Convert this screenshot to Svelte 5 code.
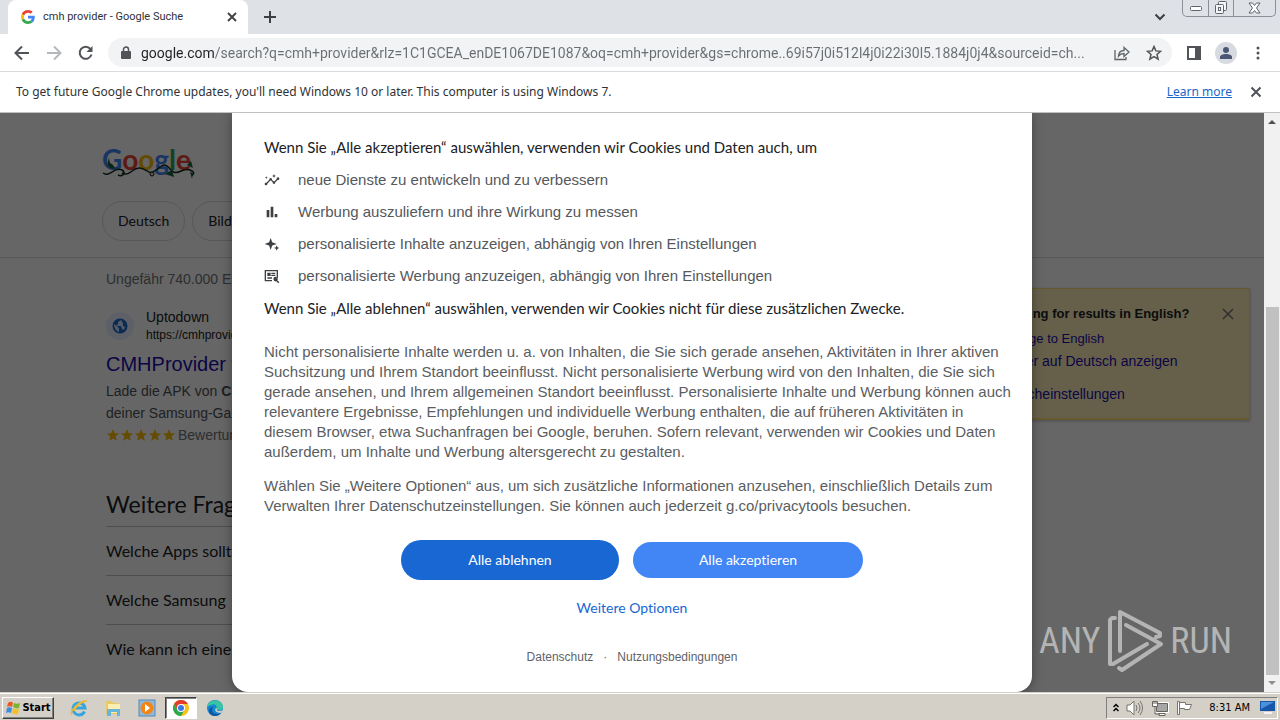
<script>
  const url = 'google.com/search?q=cmh+provider&rlz=1C1GCEA_enDE1067DE1087&oq=cmh+provider&gs=chrome..69i57j0i512l4j0i22i30l5.1884j0j4&sourceid=ch...';
  const uses = [
    { icon: 'M21 8c-1.45 0-2.26 1.44-1.93 2.51l-3.55 3.56c-.3-.09-.74-.09-1.04 0l-2.55-2.55C12.27 10.45 11.46 9 10 9c-1.45 0-2.27 1.44-1.93 2.52l-4.56 4.55C2.44 15.74 1 16.55 1 18a2 2 0 0 0 2 2c1.45 0 2.26-1.44 1.93-2.51l4.55-4.56c.3.09.74.09 1.04 0l2.55 2.55C12.73 16.55 13.54 18 15 18c1.45 0 2.27-1.44 1.93-2.52l3.56-3.55C21.56 12.26 23 11.45 23 10a2 2 0 0 0-2-2zM15 9l.94-2.07L18 6l-2.06-.93L15 3l-.92 2.07L12 6l2.08.93zM3.500 11L4 9l2-.5L4 8l-.5-2L3 8l-2 .5L3 9z', text: 'neue Dienste zu entwickeln und zu verbessern' },
    { icon: 'M4 9h4v11H4zM10 4h4v16h-4zM16 15h4v5h-4z', text: 'Werbung auszuliefern und ihre Wirkung zu messen' },
    { icon: 'M10 3l2.300 6.200L19 12l-6.700 2.300L10 21l-2.300-6.700L1 12l6.700-2.800zM19 14l1.200 2.800L23 18l-2.800 1.200L19 22l-1.200-2.800L15 18l2.800-1.200z', text: 'personalisierte Inhalte anzuzeigen, abhängig von Ihren Einstellungen' },
    { icon: 'M1 3h20v12h-2V5H3v13h9v2H1zM5 7h5v5H5zM11 7h6v2h-6zM11 10h6v2h-6zM5 14h7v2H5zM17 13a3.500 3.500 0 0 1 3 5.500l3 3-1.500 1.500-3-3A3.500 3.500 0 1 1 17 13z', text: 'personalisierte Werbung anzuzeigen, abhängig von Ihren Einstellungen' }
  ];
  const questions = ['Welche Apps sollte', 'Welche Samsung', 'Wie kann ich eine'];
</script>

<div class="desktop">
  <header>
    <div class="tabs">
      <div class="tab">
        <svg width="14" height="14" viewBox="0 0 48 48"><path fill="#EA4335" d="M24 9.500c3.540 0 6.710 1.220 9.210 3.600l6.850-6.850C35.900 2.380 30.470 0 24 0 14.620 0 6.510 5.380 2.560 13.220l7.980 6.190C12.430 13.720 17.740 9.500 24 9.500z"/><path fill="#4285F4" d="M46.980 24.550c0-1.570-.15-3.090-.38-4.550H24v9.020h12.940c-.58 2.960-2.260 5.480-4.780 7.180l7.730 6c4.510-4.180 7.090-10.360 7.090-17.650z"/><path fill="#FBBC05" d="M10.530 28.590c-.48-1.450-.76-2.990-.76-4.590s.27-3.140.76-4.590l-7.980-6.190C.92 16.460 0 20.120 0 24c0 3.880.92 7.540 2.560 10.780z"/><path fill="#34A853" d="M24 48c6.480 0 11.930-2.130 15.890-5.810l-7.730-6c-2.150 1.450-4.920 2.300-8.160 2.300-6.260 0-11.570-4.220-13.470-9.910l-7.980 6.190C6.510 42.620 14.620 48 24 48z"/></svg>
        <span>cmh provider - Google Suche</span>
        <button aria-label="Close tab"><svg width="10" height="10" viewBox="0 0 10 10"><path d="M1 1l8 8M9 1L1 9" stroke="#3c4043" stroke-width="1.800"/></svg></button>
      </div>
      <button class="newtab" aria-label="New tab"><svg width="12" height="12" viewBox="0 0 12 12"><path d="M6 0v12M0 6h12" stroke="#3c4043" stroke-width="2"/></svg></button>
      <button class="tabsearch" aria-label="Search tabs"><svg width="12" height="8" viewBox="0 0 12 8"><path d="M1.500 1.500L6 6l4.500-4.500" fill="none" stroke="#3c4043" stroke-width="2"/></svg></button>
      <div class="winctl">
        <button aria-label="Minimize"><svg width="12" height="5" viewBox="0 0 12 5"><rect x=".5" y=".5" width="11" height="4" rx="1" fill="#fff" stroke="#60646c"/></svg></button>
        <button aria-label="Restore"><svg width="14" height="14" viewBox="0 0 14 14" fill="#f4f5f7" stroke="#60646c"><rect x="4.500" y=".5" width="8" height="9" rx="1"/><rect x="1.500" y="3.500" width="8" height="9" rx="1"/><rect x="4.500" y="6.500" width="2" height="3"/></svg></button>
        <button class="wide" aria-label="Close"><svg width="13" height="12" viewBox="0 0 13 12"><path d="M1 1h3.500l2 2.500L8.500 1H12L8.500 6l3.500 5H8.500l-2-2.500-2 2.500H1l3.500-5z" fill="#fff" stroke="#60646c"/></svg></button>
      </div>
    </div>

    <div class="toolbar">
      <button aria-label="Back"><svg width="16" height="16" viewBox="0 0 16 16"><path d="M15 8H2M8 1.500L1.500 8 8 14.500" fill="none" stroke="#505357" stroke-width="2"/></svg></button>
      <button aria-label="Forward"><svg width="16" height="16" viewBox="0 0 16 16"><path d="M1 8h13M8 1.500L14.500 8 8 14.500" fill="none" stroke="#b5b8bb" stroke-width="2"/></svg></button>
      <button aria-label="Reload"><svg width="16" height="16" viewBox="0 0 16 16"><path d="M13.500 9.500A6 6 0 1 1 12.400 4" fill="none" stroke="#505357" stroke-width="2"/><path d="M14.500 1v6h-6z" fill="#505357"/></svg></button>
      <div class="omnibox">
        <svg width="10" height="13" viewBox="0 0 10 13"><path d="M2.500 6V3.500a2.500 2.500 0 0 1 5 0V6" fill="none" stroke="#505357" stroke-width="1.500"/><rect x="0" y="5" width="10" height="8" rx="1" fill="#505357"/></svg>
        <input aria-label="Address and search bar" value={url} />
        <button aria-label="Share"><svg width="16" height="16" viewBox="0 0 16 16" fill="none" stroke="#5f6368" stroke-width="1.300"><path d="M1 5v9.500h11V12"/><path d="M4.500 11c.3-4 2.500-5.500 5.500-5.500V2.500L15 7l-5 4.500V8.500c-2.500 0-4 .5-5.500 2.500z"/></svg></button>
        <button aria-label="Bookmark"><svg width="16" height="16" viewBox="0 0 16 16"><path d="M8 1.500l1.900 4.400 4.600.4-3.500 3.100 1.100 4.700L8 11.600l-4.100 2.500L5 9.400 1.500 6.300l4.600-.4z" fill="none" stroke="#505357" stroke-width="1.500"/></svg></button>
      </div>
      <button aria-label="Side panel"><svg width="14" height="14" viewBox="0 0 14 14"><path d="M0 0h14v14H0zM2 2v10h6V2z" fill-rule="evenodd" fill="#505357"/></svg></button>
      <button class="avatar" aria-label="Profile"><svg width="12" height="12" viewBox="0 0 12 12" fill="#4b5675"><circle cx="6" cy="3" r="3"/><path d="M0 12V10c0-2 3-3 6-3s6 1 6 3v2z"/></svg></button>
      <button aria-label="Menu"><svg width="4" height="14" viewBox="0 0 4 14" fill="#505357"><circle cx="2" cy="2" r="1.500"/><circle cx="2" cy="7" r="1.500"/><circle cx="2" cy="12" r="1.500"/></svg></button>
    </div>

    <div class="infobar">
      <span>To get future Google Chrome updates, you'll need Windows 10 or later. This computer is using Windows 7.</span>
      <a href="#learn">Learn more</a>
      <button aria-label="Dismiss"><svg width="12" height="12" viewBox="0 0 12 12"><path d="M1.500 1.500l9 9M10.500 1.500l-9 9" stroke="#505357" stroke-width="2"/></svg></button>
    </div>
  </header>

  <div class="view">
    <div class="page">
      <div class="pagehead">
        <svg class="logo" width="96" height="38" viewBox="0 0 96 38" role="img" aria-label="Google">
          <text x="0" y="25" font-family="Lato, sans-serif" font-size="28" font-weight="700"><tspan fill="#4285f4">G</tspan><tspan fill="#ea4335">o</tspan><tspan fill="#fbbc05">o</tspan><tspan fill="#4285f4">g</tspan><tspan fill="#34a853">l</tspan><tspan fill="#ea4335">e</tspan></text>
          <path d="M1 28c7 5 11-7 19-3 5 3 0 7-4 5M20 28c9 4 10-6 18-5s8 8 16 2 9-7 15 0 12-3 19 0 2 4 2 6" fill="none" stroke="#152c22" stroke-width="1.500"/>
          <path d="M7 13c-3 8 0 11 6 11-1-4-3-5-5-6M63 29l7-4 2 7zM85 20l4-4 2 7zM88 27l3 1-1 6z" fill="#17613f"/><circle cx="50" cy="29" r="2" fill="#ddd" stroke="#111"/>
        </svg>
        <div class="chips"><button>Deutsch</button><button>Bilder</button></div>
      </div>
      <div class="results">
        <main>
          <p class="stats">Ungefähr 740.000 Erg</p>
          <div class="source">
            <span class="globe"><svg width="16" height="16" viewBox="0 0 16 16"><circle cx="8" cy="8" r="7.500" fill="#1967d2"/><path d="M2 6l5 4v4C4 13 2 10 2 6zM9 2l-3 2v2L4 8h5l1 3 2 1 1-3-2-1V5z" fill="#d3e3fd"/></svg></span>
            <div><div class="site">Uptodown</div><div class="link">https://cmhprovid</div></div>
          </div>
          <a class="title" href="#result">CMHProvider für</a>
          <p class="desc">Lade die APK von <b>CM</b><br />deiner Samsung-Gal</p>
          <p class="rating"><span>{#each Array(5) as _}<svg width="14" height="14" viewBox="0 0 14 14"><path d="M7 1l1.700 4.200 4.300.3-3.300 2.800 1.100 4.500L7 10.400l-3.800 2.400 1.100-4.500L1 5.500l4.300-.3z" fill="#fbbc04"/></svg>{/each}</span>Bewertung</p>
          <h2>Weitere Fragen</h2>
          {#each questions as q}<div class="question">{q}</div>{/each}
        </main>
        <aside>
          <div class="tip"><strong>Looking for results in English?</strong><button aria-label="Close"><svg width="12" height="12" viewBox="0 0 12 12"><path d="M1 1l10 10M11 1L1 11" stroke="#70757a" stroke-width="1.500"/></svg></button></div>
          <a class="l1" href="#en">Change to English</a>
          <a class="l2" href="#de">Weiter auf Deutsch anzeigen</a>
          <a class="l3" href="#lang">Spracheinstellungen</a>
        </aside>
      </div>
    </div>

    <div class="scrim">
      <div class="dialog" role="dialog" aria-label="Cookies">
        <p class="lead">Wenn Sie „Alle akzeptieren“ auswählen, verwenden wir Cookies und Daten auch, um</p>
        <ul>
          {#each uses as u}<li><svg width="16" height="16" viewBox="0 0 24 24" fill="#3c4043"><path fill-rule="evenodd" d={u.icon} /></svg>{u.text}</li>{/each}
        </ul>
        <p class="lead">Wenn Sie „Alle ablehnen“ auswählen, verwenden wir Cookies nicht für diese zusätzlichen Zwecke.</p>
        <p class="body first">Nicht personalisierte Inhalte werden u. a. von Inhalten, die Sie sich gerade ansehen, Aktivitäten in Ihrer aktiven<br />Suchsitzung und Ihrem Standort beeinflusst. Nicht personalisierte Werbung wird von den Inhalten, die Sie sich<br />gerade ansehen, und Ihrem allgemeinen Standort beeinflusst. Personalisierte Inhalte und Werbung können auch<br />relevantere Ergebnisse, Empfehlungen und individuelle Werbung enthalten, die auf früheren Aktivitäten in<br />diesem Browser, etwa Suchanfragen bei Google, beruhen. Sofern relevant, verwenden wir Cookies und Daten<br />außerdem, um Inhalte und Werbung altersgerecht zu gestalten.</p>
        <p class="body">Wählen Sie „Weitere Optionen“ aus, um sich zusätzliche Informationen anzusehen, einschließlich Details zum<br />Verwalten Ihrer Datenschutzeinstellungen. Sie können auch jederzeit g.co/privacytools besuchen.</p>
        <div class="actions"><button class="reject">Alle ablehnen</button><button class="accept">Alle akzeptieren</button></div>
        <a class="more" href="#options">Weitere Optionen</a>
        <div class="legal"><a href="#privacy">Datenschutz</a><span>·</span><a href="#terms">Nutzungsbedingungen</a></div>
      </div>
    </div>

    <div class="watermark">
      <span>ANY</span>
      <svg width="58" height="66" viewBox="0 0 58 66" fill="none" stroke="#b4b4b4" stroke-width="4" stroke-linecap="round" stroke-linejoin="round"><path d="M9 10H6l-2 2v44h3l34-20M14 43V4l40 21v3l-4 1M20 17l35 19-39 26-3-2"/></svg>
      <span>RUN</span>
    </div>

    <div class="scrollbar"><svg width="8" height="4" viewBox="0 0 8 4"><path d="M0 4l4-4 4 4z" fill="#505050"/></svg><div class="thumb"></div><svg width="8" height="4" viewBox="0 0 8 4"><path d="M0 0l4 4 4-4z" fill="#909090"/></svg></div>
  </div>

  <footer>
    <button class="start"><svg width="16" height="16" viewBox="0 0 16 16"><path d="M3 3c2-2 4-1 5 0L7 7C5 6 4 6 2 7z" fill="#ea5b25"/><path d="M9 3c2 1 4 1 6 0l-1 5c-2 1-4 0-6-1z" fill="#79b530"/><path d="M2 8c2-1 3-1 5 0l-1 5c-2-1-3-1-5 0z" fill="#3a8de0"/><path d="M8 8c2 1 4 2 6 1l-1 5c-2 1-4 0-6-1z" fill="#f6c02c"/></svg>Start</button>
    <button class="task" aria-label="Internet Explorer"><svg width="18" height="18" viewBox="0 0 18 18" fill="none"><path d="M14.500 12.500A6 6 0 1 1 15 9H5" stroke="#36a5dc" stroke-width="3"/><path d="M2 16C-1 13 9 1 17 2c-4-.5-11 5-13 10" stroke="#e8ba36" stroke-width="1.500"/></svg></button>
    <button class="task" aria-label="Explorer"><svg width="18" height="18" viewBox="0 0 18 18"><path d="M2 2h6l1 2h6v11H2z" fill="#e8c965"/><path d="M4 5h12v9H4z" fill="#fbeeb0"/><path d="M3 10h13v7h-3v-4H7v4H3z" fill="#69b5d7"/></svg></button>
    <button class="task" aria-label="Media Player"><svg width="18" height="18" viewBox="0 0 18 18"><rect x="1" y="1" width="16" height="16" fill="#8dbbe0" stroke="#5689b5"/><circle cx="9" cy="9" r="6.500" fill="#f28518"/><path d="M7 5l5 4-5 4z" fill="#fff"/></svg></button>
    <button class="task active" aria-label="Chrome"><svg width="16" height="16" viewBox="0 0 16 16"><circle cx="8" cy="8" r="8" fill="#fbc116"/><path d="M1.070 4A8 8 0 0 1 14.930 4H8L4.500 10z" fill="#e33b2e"/><path d="M1.070 4A8 8 0 0 0 8 16l3.500-6H4.500z" fill="#2da94f"/><circle cx="8" cy="8" r="4" fill="#fff"/><circle cx="8" cy="8" r="3" fill="#3b78e7"/></svg></button>
    <button class="task" aria-label="Edge"><svg width="18" height="18" viewBox="0 0 18 18"><circle cx="9" cy="9" r="8" fill="#1685d1"/><path d="M1 8C2 0 16-1 17 8c0 4-5 4-7 2 2-3-1-6-5-4-2 1-3 1-4 2z" fill="#39c5a4"/><path d="M7 8c-3 5 2 9 8 6-4 5-12 3-12-2 0-3 2-4 4-4z" fill="#0d559f"/><path d="M11 10c-1 2 2 3 6 1l-2 3c-5 0-7-3-5-5z" fill="#d5d0c8"/></svg></button>
    <div class="tray">
      <svg width="6" height="9" viewBox="0 0 6 9"><path d="M.5 4L3 1.500 5.500 4M.5 8L3 5.500 5.500 8" fill="none" stroke="#000" stroke-width="1.500"/></svg>
      <svg width="18" height="16" viewBox="0 0 18 16" fill="none" stroke="#77736e"><path d="M1 5h3l4-4v14l-4-4H1z" fill="#fff"/><path d="M10 5q2 3 0 6M12 3q4 5 0 10M14 1q5 7 0 14"/></svg>
      <svg width="18" height="16" viewBox="0 0 18 16" stroke="#66635e"><path d="M5.500 3.500h11v8h-11z" fill="#a6a6a6" stroke="#fff" stroke-width="3"/><path d="M5.500 3.500h11v8h-11z" fill="#a6a6a6"/><path d="M1.500 1.500h5v5h-5zM3 1v3M5 1v3M8 13.500h6v2H8z" fill="#fff"/><path d="M4 7v7h5" fill="none"/></svg>
      <svg width="17" height="16" viewBox="0 0 17 16" fill="#fff" stroke="#77736e"><path d="M1.500 1.500h2v13h-2zM3.500 2.500h6v2h6l-2 5h-5v-1h-5z"/></svg>
      <time>8:31 AM</time>
      <svg width="15" height="13" viewBox="0 0 15 13"><rect width="15" height="10" fill="#1756a8"/><path d="M1 1h13L1 8z" fill="#4a91da"/><path d="M4 11h8v2H4z" fill="#f4f4f4"/></svg>
    </div>
  </footer>
</div>

<style>
  :global(body) { margin: 0; }
  * { box-sizing: border-box; }
  svg { display: block; flex: none; }
  p, ul, h2 { margin: 0; padding: 0; }
  button { border: 0; background: none; padding: 0; font: inherit; color: inherit; display: flex; align-items: center; justify-content: center; flex: none; }
  a { text-decoration: none; }
  .desktop { height: 100vh; display: flex; flex-direction: column; overflow: hidden; font: 12px/16px "Noto Sans", sans-serif; color: #303236; }
  header { flex: none; background: #fff; border-bottom: 1px solid #bfc1c4; }
  .tabs { height: 34px; background: #dee1e6; display: flex; padding-left: 8px; }
  .tab { width: 240px; background: #fff; border-radius: 8px 8px 0 0; display: flex; align-items: center; gap: 8px; padding: 0 11px 0 13px; font-family: Roboto, sans-serif; font-size: 11px; }
  .tab span { flex: 1; white-space: nowrap; }
  .newtab { width: 44px; }
  .tabsearch { margin-left: auto; width: 44px; }
  .winctl { display: flex; height: 17px; border: 1px solid #8b8f98; border-top: 0; border-radius: 0 0 5px 5px; margin-right: 4px; }
  .winctl button { width: 25px; }
  .winctl button + button { border-left: 1px solid #8b8f98; }
  .winctl .wide { width: 42px; }
  .toolbar { height: 38px; display: flex; align-items: center; gap: 16px; padding: 0 14px; border-bottom: 1px solid #d8dadd; }
  .toolbar > button { min-width: 16px; }
  .omnibox { flex: 1; min-width: 0; height: 29px; border-radius: 15px; background: #f1f3f4; display: flex; align-items: center; gap: 16px; padding: 0 10px 0 13px; margin: 0 -2px; }
  .omnibox input { flex: 1; min-width: 0; border: 0; padding: 0; margin: 0 -8px 0 -6px; font: 14px/20px Roboto, sans-serif; color: transparent; background: linear-gradient(90deg, #202124 73px, #6a6e73 73px); -webkit-background-clip: text; background-clip: text; outline: 0; }
  .toolbar .avatar { width: 22px; height: 22px; margin: 0 -3px; border-radius: 50%; background: #d7dae0; }
  .infobar { height: 40px; display: flex; align-items: center; padding: 0 18px 0 16px; }
  .infobar a { margin-left: auto; margin-right: 18px; color: #1a66c9; text-decoration: underline; }
  .view { flex: 1; min-height: 0; position: relative; overflow: hidden; background: #fff; }
  .page { height: 100%; overflow: hidden; font: 14px/22px "Liberation Sans", Arial, sans-serif; color: #4d5156; margin-right: 16px; }
  .pagehead { height: 145px; border-bottom: 1px solid #dadce0; padding: 32px 0 0 102px; }
  .chips { display: flex; gap: 7px; margin-top: 18px; font: 14px/20px Lato, sans-serif; color: #202124; }
  .chips button { height: 40px; padding: 0 15px; border: 1px solid #dadce0; border-radius: 20px; }
  .results { display: flex; justify-content: space-between; padding: 9px 14px 0 106px; }
  main { width: 652px; }
  .stats { color: #70757a; line-height: 24px; }
  .source { display: flex; gap: 12px; align-items: center; margin-top: 17px; color: #202124; }
  .globe { width: 28px; height: 28px; border-radius: 50%; background: #e8f0fe; display: grid; place-items: center; }
  .site { line-height: 18px; }
  .link { font-size: 12px; line-height: 18px; }
  .title { display: block; font-size: 20px; line-height: 28px; color: #1a0dab; margin-top: 6px; }
  .desc { margin-top: 2px; }
  .rating { display: flex; gap: 2px; align-items: center; color: #70757a; }
  .rating span { display: flex; }
  h2 { font: 400 23px/28px Lato, sans-serif; color: #202124; margin: 44px 0 8px; }
  .question { height: 49px; border-top: 1px solid #bfc2c5; font: 16px/48px Lato, sans-serif; color: #202124; }
  aside { width: 370px; height: 132px; margin-top: 21px; background: #fff0bc; border: 1px solid #ffdc78; border-bottom-width: 2px; box-shadow: 0 1px 3px #bbb; padding: 15px 15px 0 117px; }
  .tip { display: flex; justify-content: space-between; font-size: 13px; color: #202124; line-height: 20px; white-space: nowrap; }
  .tip button { width: 12px; }
  aside a { display: block; color: #1a0dab; line-height: 22px; white-space: nowrap; }
  .l1 { margin-top: 4px; font-size: 13px; }
  .l3 { margin-top: 11px; }
  .scrim { position: absolute; inset: 0 16px 0 0; background: rgba(0, 0, 0, .6); display: flex; justify-content: center; }
  .dialog { width: 800px; height: 100%; background: #fff; border-radius: 0 0 16px 16px; padding: 18px 32px 0; box-shadow: 0 2px 12px rgba(0, 0, 0, .35); display: flex; flex-direction: column; font-variant-ligatures: none; }
  .lead { font-family: Lato, sans-serif; font-size: 15px; line-height: 32px; color: #202124; white-space: nowrap; }
  ul { list-style: none; padding-top: 1px; }
  li { display: flex; gap: 18px; align-items: center; line-height: 32px; font-family: "Liberation Sans", Arial, sans-serif; font-size: 15px; color: #55585c; }
  .body { font: 15px/20px "Liberation Sans", Arial, sans-serif; color: #5a5d61; margin-top: 14px; white-space: nowrap; }
  .body.first { margin-top: 18px; }
  .actions { display: flex; justify-content: center; align-items: center; gap: 14px; margin-top: 24px; font-family: Lato, sans-serif; font-size: 14px; line-height: 20px; color: #fff; }
  .actions button { font-variant-ligatures: none; }
  .reject { width: 218px; height: 40px; border-radius: 20px; background: #1967d2; }
  .accept { width: 230px; height: 36px; border-radius: 18px; background: #4285f4; }
  .more { align-self: center; margin-top: 18px; color: #1967d2; font-family: Lato, sans-serif; font-size: 14px; line-height: 20px; }
  .legal { display: flex; justify-content: center; gap: 10px; margin-top: 31px; font: 12px/16px "Liberation Sans", Arial, sans-serif; color: #5f6368; }
  .legal a { color: #5f6368; }
  .watermark { position: absolute; right: 48px; bottom: 18px; display: flex; align-items: center; gap: 6px; color: #b4b4b4; font: 400 36px/40px "Roboto Condensed", "Liberation Sans Narrow", sans-serif; }
  .scrollbar { position: absolute; right: 0; top: 0; bottom: 0; width: 16px; background: #f1f1f1; display: flex; flex-direction: column; align-items: center; justify-content: space-between; padding: 7px 0; }
  .thumb { width: 13px; flex: 0 0 368px; margin: auto 0 6px; background: #c1c1c1; }
  footer { flex: none; height: 28px; background: #d4d0c8; border-top: 1px solid #d4d0c8; box-shadow: inset 0 1px #fff; display: flex; align-items: center; padding: 3px 2px 1px; font: 11px/14px "DejaVu Sans Condensed", "DejaVu Sans", sans-serif; color: #000; }
  .start { width: 52px; height: 22px; border: 1px solid; border-color: #fff #404040 #404040 #fff; box-shadow: inset -1px -1px #808080; font-weight: 700; gap: 1px; margin-right: 9px; }
  .task { width: 32px; height: 22px; margin-right: 2px; }
  .active { border: 1px solid; border-color: #404040 #fff #fff #404040; background: #fff; box-shadow: inset 1px 1px #808080; }
  .tray { margin-left: auto; height: 22px; border: 1px solid; border-color: #808080 #fff #fff #808080; display: flex; align-items: center; gap: 7px; padding: 0 2px 0 6px; }
  .tray time { margin: 0 3px 0 9px; }
</style>
